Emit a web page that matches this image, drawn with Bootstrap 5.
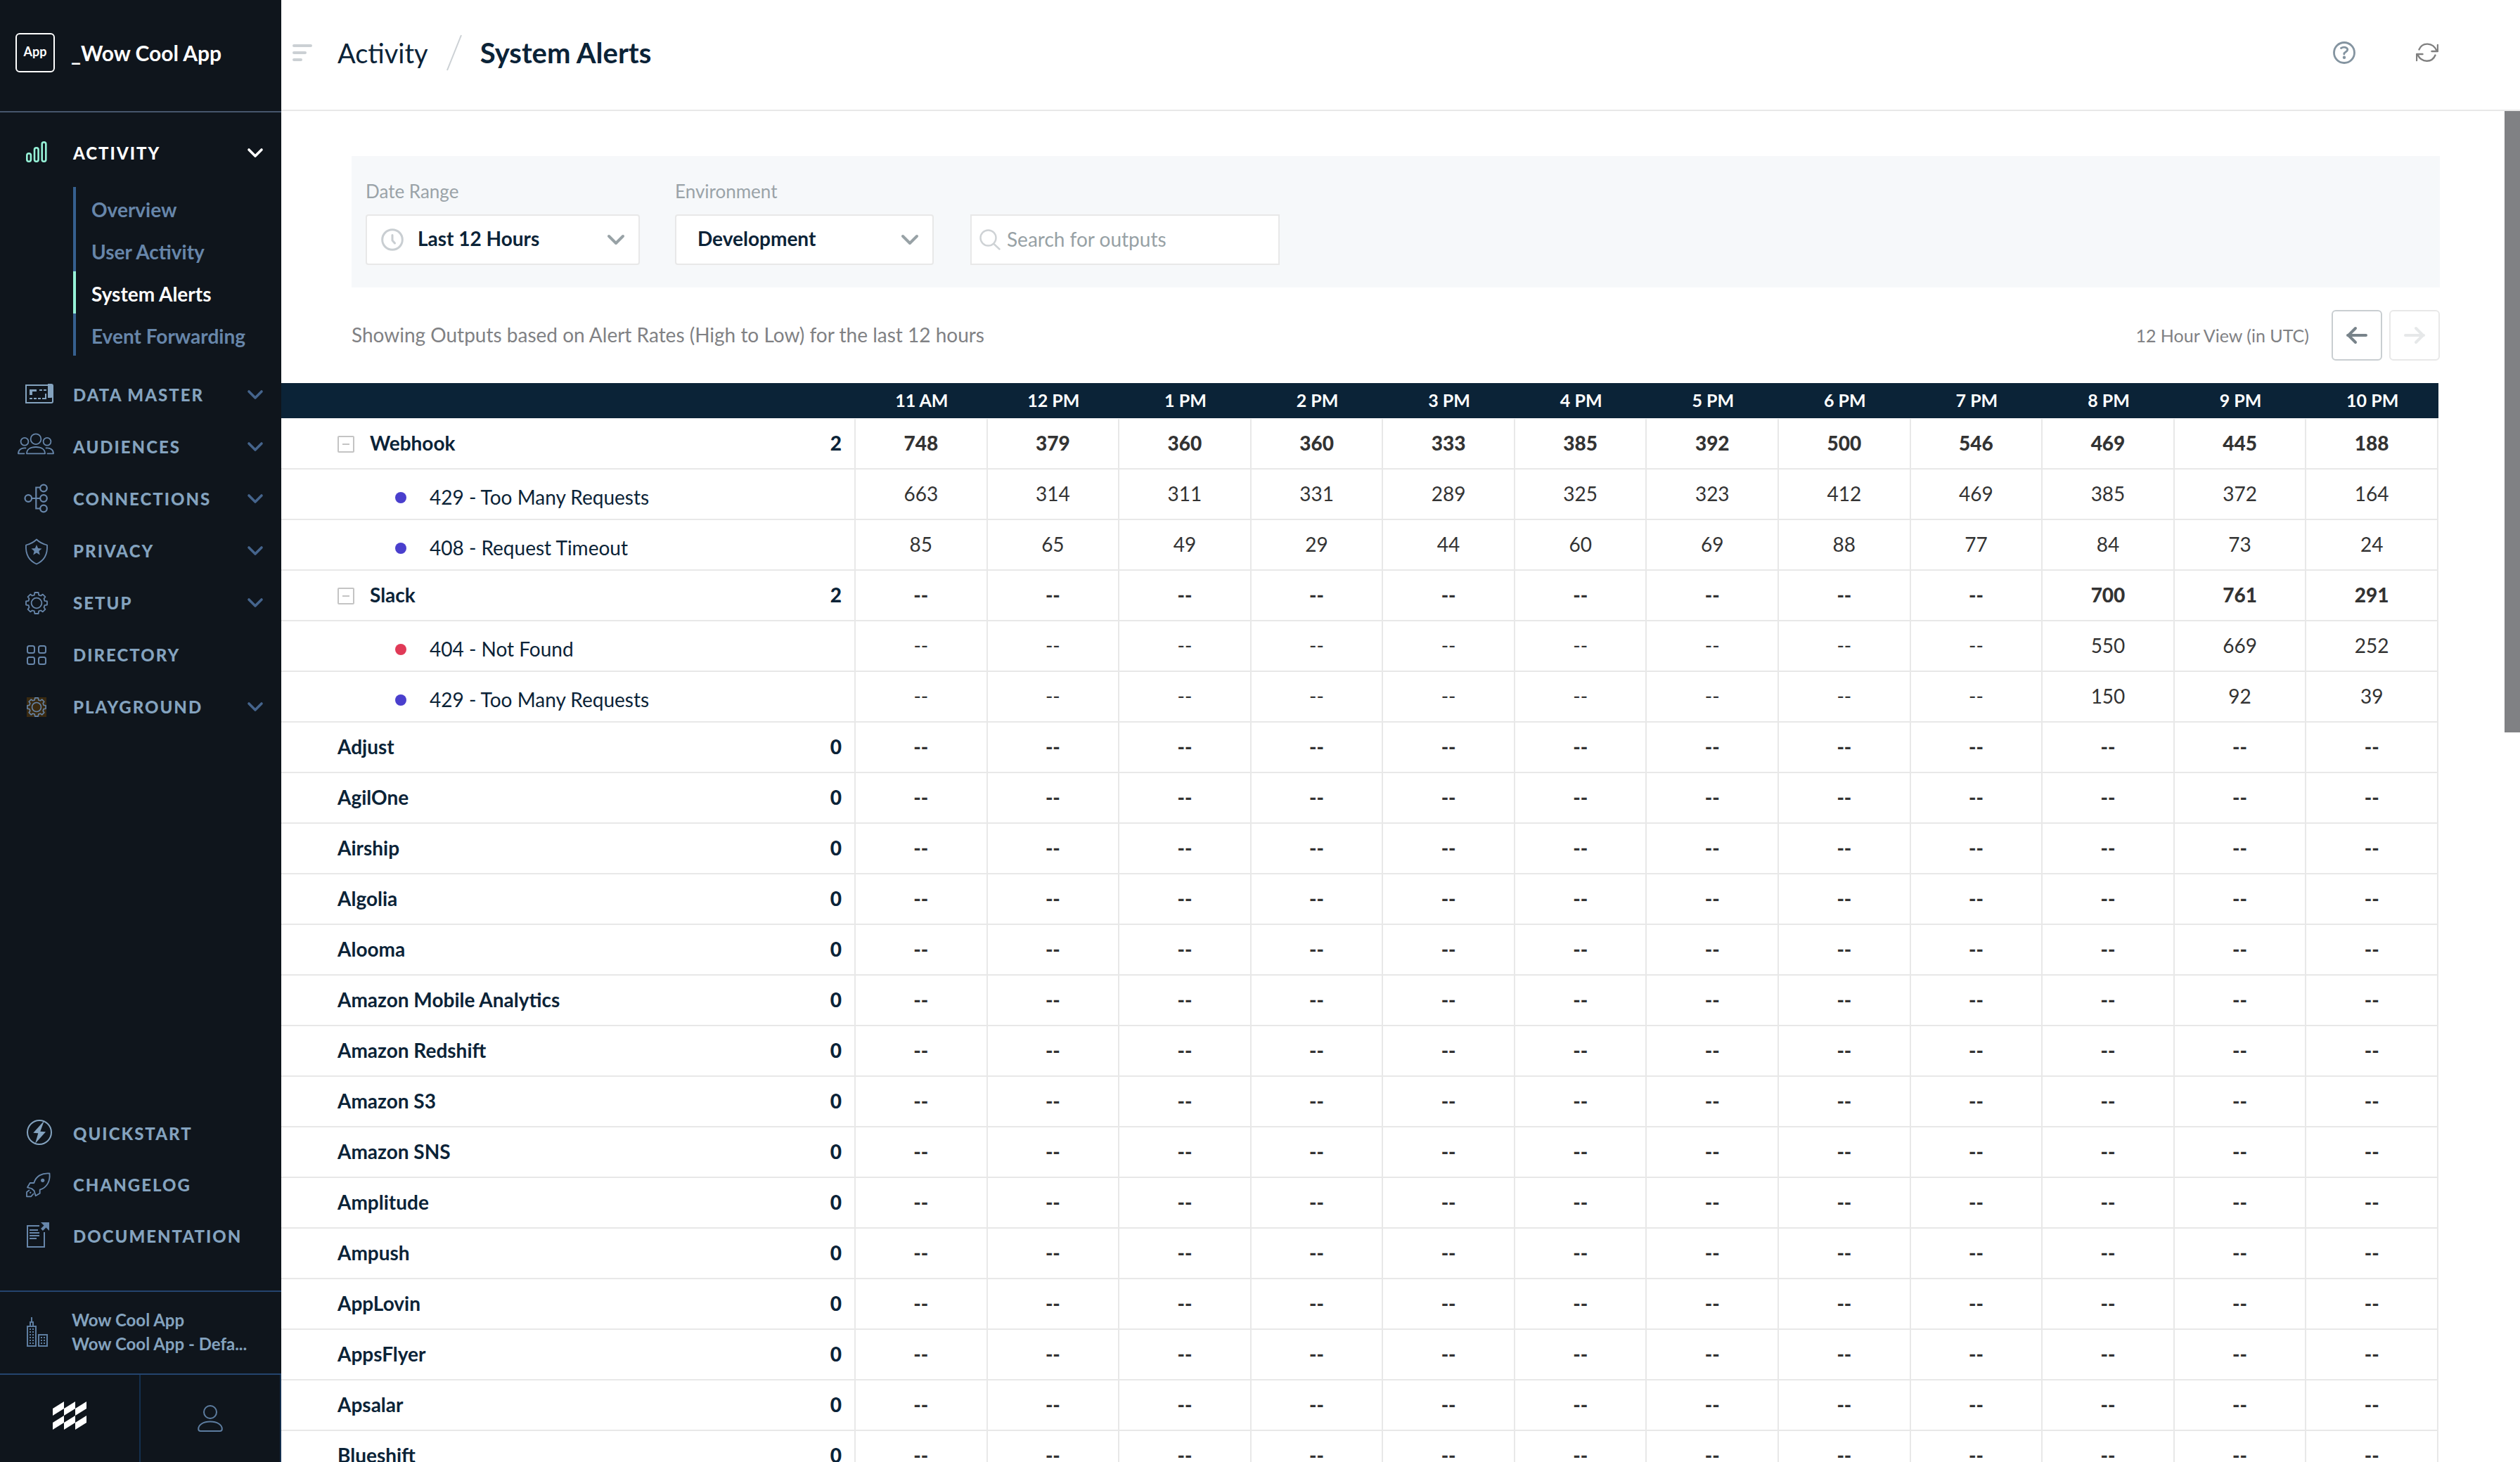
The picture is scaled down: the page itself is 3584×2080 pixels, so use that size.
<!DOCTYPE html>
<html lang="en">
<head>
<meta charset="utf-8">
<meta name="viewport" content="width=device-width, initial-scale=1">
<title>System Alerts</title>
<link rel="stylesheet" href="https://cdn.jsdelivr.net/npm/bootstrap@5.3.0/dist/css/bootstrap.min.css">
<style>
  :root { --ink: #0b2337; --rail: #0f151c; --steel: #84a3bf; --slate: #6786aa; --line: #e8e8e8; --mint: #96f2d7; }
  body { font-family: "Lato", "Liberation Sans", sans-serif; font-size: 28px; line-height: 36px; color: var(--ink); background: #fff; }
  svg { display: block; flex: none; }
  a { text-decoration: none; }

  /* sidebar */
  .rail { flex: 0 0 400px; background: var(--rail); color: var(--steel); }
  .rail-brand { height: 160px; padding: 0 22px 8px; gap: 23px; border-bottom: 2px solid #46566c; color: #fff; font-size: 30px; font-weight: 700; }
  .app-tile { width: 56px; height: 56px; border: 2px solid #fff; border-radius: 6px; font-size: 18px; line-height: 20px; padding-bottom: 4px; }
  .rail-main { padding-top: 21px; }
  .rail-link { height: 74px; padding: 0 25px 0 24px; gap: 24px; color: var(--steel); font-size: 24px; font-weight: 900; letter-spacing: 2px; }
  .rail-link .ico { color: var(--slate); }
  .rail-link .caret { color: #45648c; }
  .rail-link.current, .rail-link.current .caret { color: #fff; }
  .rail-link.current .ico { color: var(--mint); }
  .rail-sub { margin: 11px 0 19px 104px; }
  .rail-sub a { display: block; height: 60px; line-height: 64px; padding-left: 22px; border-left: 4px solid #36608f; color: var(--slate); font-weight: 700; }
  .rail-sub a.current { border-color: var(--mint); color: #fff; }
  .rail-help { padding-bottom: 41px; }
  .rail-help .rail-link { height: 73px; }
  .rail-org { height: 118px; padding: 0 24px 2px; gap: 22px; border-top: 2px solid #24446e; color: var(--steel); font-size: 24px; line-height: 34px; font-weight: 700; }
  .rail-org .ico { color: #5d7da0; }
  .rail-foot { height: 126px; border-top: 2px solid #24446e; }
  .rail-foot a { border-right: 2px solid #14304f; color: #5d7da0; }
  .rail-foot a.logo { color: #fff; padding-bottom: 8px; }

  /* top bar */
  .topbar { height: 158px; border-bottom: 2px solid var(--line); padding: 0 116px 6px 16px; font-size: 38px; line-height: 48px; }
  .topbar a { color: var(--ink); }
  .topbar h1 { font-size: 40px; line-height: 48px; }
  .burger, .tool { border: 0; background: none; padding: 0; }
  .burger { color: #cbd0d4; margin-right: 36px; }
  .tools { gap: 86px; }

  /* filters */
  .filters { margin: 64px 92px 0 100px; padding: 32px 20px 32px; background: #f6f8fa; }
  .filters label { display: block; font-size: 26px; line-height: 36px; margin-bottom: 15px; color: #9aa3a8; }
  .box { height: 72px; border: 2px solid var(--line); border-radius: 4px; background: #fff; font-size: 28px; padding: 0 40px 4px 30px; color: var(--ink); font-weight: 700; width: 100%; appearance: none; }
  .box-date { padding-left: 72px; }
  .box-search { border-radius: 0; font-weight: 400; padding: 0 16px 2px 50px; }
  .box-search::placeholder { color: #97a1a5; opacity: 1; }
  .w-date { width: 390px; margin-right: 50px; }
  .w-env { width: 368px; margin-right: 52px; }
  .w-search { width: 440px; }
  .pin { position: absolute; top: 0; height: 72px; display: flex; align-items: center; pointer-events: none; }
  .pin-l { left: 22px; color: #c9ced2; }
  .pin-s { left: 13px; color: #ced2d5; }
  .pin-r { right: 20px; color: #98a2a6; }

  .caption-bar { margin: 32px 92px 32px 100px; color: #808184; }
  .caption { padding-bottom: 2px; }
  .range { font-size: 25px; margin-right: 32px; }
  .pagers { gap: 10px; }
  .pager { width: 72px; height: 72px; border: 2px solid #c9ced1; border-radius: 6px; background: #fff; color: #78838a; padding: 0; }
  .pager:disabled { border-color: var(--line); color: #e6e8e9; }

  /* alert grid */
  .grid-wrap { margin-right: 94px; }
  .grid { width: 100%; table-layout: fixed; border-collapse: separate; border-spacing: 0; }
  .grid col.name { width: 817px; }
  .grid th, .grid td { padding: 0 0 2px; text-align: center; }
  .grid thead td, .grid thead th { height: 51px; background: var(--ink); border-bottom: 1px solid #fff; color: #fff; font-size: 25px; line-height: 32px; font-weight: 700; }
  .grid tbody th, .grid tbody td { height: 72px; border-bottom: 2px solid var(--line); border-right: 2px solid var(--line); font-weight: 400; color: #333; }
  .grid tbody tr.top td { font-weight: 900; }
  .grid tbody tr.top th { font-weight: 700; }
  .grid tbody th { color: var(--ink); padding: 0 18px 2px 80px; }
  .grid tbody tr.code th { padding: 7px 18px 0 162px; }
  .count { font-weight: 900; }
  .fold { border: 0; background: none; padding: 4px 0 0; margin-right: 22px; color: #c4c4c4; }
  .dot { width: 16px; height: 16px; border-radius: 50%; margin: 3px 33px 0 0; }
  .dot-blue { background: #4a3fcd; }
  .dot-red { background: #e03a57; }

  .track { flex: 0 0 22px; }
  .thumb { height: 46%; background: #808184; }
</style>
<script src="https://cdn.jsdelivr.net/npm/bootstrap@5.3.0/dist/js/bootstrap.bundle.min.js"></script>
</head>
<body>
<svg width="0" height="0" class="position-absolute" aria-hidden="true">
  <symbol id="i-caret" viewBox="0 0 24 16"><path d="M3 3l9 9 9-9" fill="none" stroke="currentColor" stroke-width="3.6" stroke-linecap="round" stroke-linejoin="round"/></symbol>
  <symbol id="i-gear" viewBox="0 0 32 32"><g fill="none" stroke="currentColor" stroke-width="1.8" stroke-linejoin="round"><path d="M12.8 4.6L13.4 1H18.6L19.2 4.6 22.2 5.5 24.8 3.6 28.4 7.2 26.5 9.8 27.4 12.8 31 13.4V18.6L27.4 19.2 26.5 22.2 28.4 24.8 24.8 28.4 22.2 26.5 19.2 27.4 18.6 31H13.4L12.8 27.4 9.8 26.5 7.2 28.4 3.6 24.8 5.5 22.2 4.6 19.2 1 18.6V13.4L4.6 12.8 5.5 9.8 3.6 7.2 7.2 3.6 9.8 5.5Z"/><circle cx="16" cy="16" r="7.4"/></g></symbol>
</svg>

<div class="d-flex vh-100 overflow-hidden">
  <aside class="rail d-flex flex-column">
    <div class="rail-brand d-flex align-items-center">
      <span class="app-tile d-flex align-items-center justify-content-center">App</span>
      <span>_Wow Cool App</span>
    </div>

    <nav class="d-flex flex-column flex-grow-1" aria-label="Main">
      <div class="rail-main mb-auto">
        <a href="#" class="rail-link current d-flex align-items-center">
          <svg class="ico" width="56" height="44" fill="none" stroke="currentColor" stroke-width="2.6"><rect x="14.3" y="22.3" width="5.6" height="11.4" rx="2.8"/><rect x="25" y="14.3" width="5.6" height="19.4" rx="2.8"/><rect x="35.7" y="6.3" width="5.6" height="27.4" rx="2.8"/></svg>
          <span class="flex-grow-1">ACTIVITY</span><svg class="caret" width="24" height="16"><use href="#i-caret"/></svg>
        </a>
        <div class="rail-sub">
          <a href="#">Overview</a>
          <a href="#">User Activity</a>
          <a href="#" class="current" aria-current="page">System Alerts</a>
          <a href="#">Event Forwarding</a>
        </div>
        <a href="#" class="rail-link d-flex align-items-center">
          <svg class="ico" width="56" height="44" fill="none" stroke="#84a3bf" stroke-width="2"><path d="M45 8H13v25h36q2 0 2-2v-5"/><path d="M44 6h5q3 0 3 3v18q-2-2-4-1h-4z" fill="#84a3bf" stroke="none"/><path d="M18 14h10v3h-6v5h-4z" fill="#84a3bf" stroke="none"/><path d="M32 15h4m2 0h4M18 27h4m2 0h4m2 0h4m2 0h5v-7"/></svg>
          <span class="flex-grow-1">DATA MASTER</span><svg class="caret" width="24" height="16"><use href="#i-caret"/></svg>
        </a>
        <a href="#" class="rail-link d-flex align-items-center">
          <svg class="ico" width="56" height="44" fill="none" stroke="currentColor" stroke-width="1.8" stroke-linecap="round" stroke-linejoin="round"><circle cx="27" cy="10.7" r="7.4"/><circle cx="11" cy="14.3" r="5.4"/><circle cx="43" cy="14.3" r="5.4"/><path d="M14 31.3c0-6 5-9.3 13-9.3s13 3.3 13 9.3zM12.5 23.5C6 23 2 26 2 31.3h8.5M41.5 23.5C48 23 52 26 52 31.3h-8.5"/></svg>
          <span class="flex-grow-1">AUDIENCES</span><svg class="caret" width="24" height="16"><use href="#i-caret"/></svg>
        </a>
        <a href="#" class="rail-link d-flex align-items-center">
          <svg class="ico" width="56" height="44" fill="none" stroke="currentColor" stroke-width="2.2"><circle cx="16.3" cy="21" r="4.8"/><circle cx="38" cy="6.5" r="4.8"/><circle cx="38" cy="21" r="4.8"/><circle cx="38" cy="35.5" r="4.8"/><path d="M21 21h12M33 5.5h-5.7v30H33"/></svg>
          <span class="flex-grow-1">CONNECTIONS</span><svg class="caret" width="24" height="16"><use href="#i-caret"/></svg>
        </a>
        <a href="#" class="rail-link d-flex align-items-center">
          <svg class="ico" width="56" height="44" fill="none" stroke="currentColor" stroke-width="1.8" stroke-linejoin="round"><path d="M28 5.500c4 4 9 6.500 15 8 .8 12-4 22-15 27C17 35.500 12.200 25.500 13 13.500c6-1.500 11-4 15-8z"/><path fill="currentColor" stroke="none" d="M28 13l2.100 5.100 5.400.4-4.100 3.500 1.300 5.400L28 24.500l-4.700 2.900 1.300-5.400-4.100-3.500 5.400-.4z"/></svg>
          <span class="flex-grow-1">PRIVACY</span><svg class="caret" width="24" height="16"><use href="#i-caret"/></svg>
        </a>
        <a href="#" class="rail-link d-flex align-items-center">
          <svg class="ico" width="56" height="44"><use href="#i-gear" x="12" y="6" width="32" height="32"/></svg>
          <span class="flex-grow-1">SETUP</span><svg class="caret" width="24" height="16"><use href="#i-caret"/></svg>
        </a>
        <a href="#" class="rail-link d-flex align-items-center">
          <svg class="ico" width="56" height="44" fill="none" stroke="currentColor" stroke-width="2"><rect x="15" y="9" width="10" height="10" rx="2.5"/><rect x="31" y="9" width="10" height="10" rx="2.5"/><rect x="15" y="25" width="10" height="10" rx="2.5"/><rect x="31" y="25" width="10" height="10" rx="2.5"/></svg>
          <span class="flex-grow-1">DIRECTORY</span>
        </a>
        <a href="#" class="rail-link d-flex align-items-center">
          <svg class="ico" width="56" height="44"><rect x="14" y="8" width="28" height="28" fill="#3a2a10"/><use href="#i-gear" x="14" y="8" width="28" height="28"/></svg>
          <span class="flex-grow-1">PLAYGROUND</span><svg class="caret" width="24" height="16"><use href="#i-caret"/></svg>
        </a>
      </div>

      <div class="rail-help">
        <a href="#" class="rail-link d-flex align-items-center">
          <svg class="ico" width="56" height="44" fill="none" stroke="#84a3bf" stroke-width="2"><circle cx="32" cy="20" r="17"/><path fill="#84a3bf" stroke="none" d="M39 3.3L23.3 20.7l7 .6L26 36l15-16.7-7.7-.6z"/></svg>
          <span>QUICKSTART</span>
        </a>
        <a href="#" class="rail-link d-flex align-items-center">
          <svg class="ico" width="56" height="44" fill="none" stroke="currentColor" stroke-width="1.8" stroke-linejoin="round"><path d="M24.3 19C27 9 36 4.5 46.500 5.500c1 10-3 20-13.800 23.200v5l-6 3.600-2.200-7.300-3.500-3-6-1.700 3.700-6.300z"/><path d="M18 29l-4 3v6.300h6l4-4.300M18.500 33.500L20 32"/><circle cx="36.7" cy="15.3" r="2.6" fill="currentColor" stroke="none"/></svg>
          <span>CHANGELOG</span>
        </a>
        <a href="#" class="rail-link d-flex align-items-center">
          <svg class="ico" width="56" height="44" fill="none" stroke="currentColor" stroke-width="2"><path d="M32 7H15v30h24V16M18 13h12M18 17h14M18 21h14M18 25h10"/><path d="M35.500 12.500l6-6" stroke-width="4"/><path d="M34 2h12v12z" fill="currentColor" stroke="none"/></svg>
          <span>DOCUMENTATION</span>
        </a>
      </div>
    </nav>

    <a href="#" class="rail-org d-flex align-items-center">
      <svg class="ico" width="56" height="44" fill="none" stroke="currentColor" stroke-width="2"><path d="M21 1v6M19 13V8h4v5M15 14h12v28H15zM31 26h12v16H31z"/><path stroke-dasharray="2 2" d="M19 17v22M23 17v22M35 29v10M39 29v10"/></svg>
      <span class="text-nowrap">Wow Cool App<br>Wow Cool App - Defa...</span>
    </a>
    <div class="rail-foot d-flex">
      <a href="#" class="logo flex-fill w-50 d-flex align-items-center justify-content-center" aria-label="Home"><svg width="48" height="40" fill="currentColor"><path d="M0 10L16 0V10L0 20zM16 10L32 0V10L16 20zM32 10L48 0V10L32 20zM0 30L16 20V30L0 40zM16 30L32 20V30L16 40zM32 30L48 20V30L32 40z"/></svg></a>
      <a href="#" class="flex-fill w-50 d-flex align-items-center justify-content-center" aria-label="Account"><svg width="36" height="38" fill="none" stroke="currentColor" stroke-width="2"><circle cx="18" cy="10" r="9"/><path d="M1.2 34c0-6 7-10.500 16.800-10.500S34.800 28 34.800 34q0 3-3 3H4.200q-3 0-3-3z"/></svg></a>
    </div>
  </aside>

  <div class="flex-grow-1 d-flex flex-column overflow-hidden">
    <header class="topbar d-flex align-items-center flex-shrink-0">
      <button class="burger" type="button" aria-label="Toggle menu"><svg width="28" height="24" stroke="currentColor" stroke-width="4" stroke-linecap="round"><path d="M2 2h24M2 12h16M2 22h10"/></svg></button>
      <a href="#">Activity</a>
      <svg class="mx-4" width="26" height="52" stroke="#cbd0d4" stroke-width="2"><path d="M3 51L23 1"/></svg>
      <h1 class="m-0 fw-bold">System Alerts</h1>
      <div class="tools d-flex align-items-center ms-auto">
        <button class="tool" type="button" aria-label="Help"><svg width="32" height="32" fill="none" stroke="#8494a0" stroke-width="2.8"><circle cx="16" cy="16" r="14.5"/><path d="M11.500 9.500c3.500-2.300 9.200-1.500 9.200 2.300 0 3.200-4.900 2.800-4.900 6.200" stroke-linecap="round"/><circle cx="16" cy="22.8" r="2.2" fill="#8494a0" stroke="none"/></svg></button>
        <button class="tool" type="button" aria-label="Refresh"><svg width="32" height="28" fill="none" stroke="#808080" stroke-width="2.4" stroke-linecap="round" stroke-linejoin="round"><path d="M4.500 9.500C9 -1.500 24 -1 29.500 11M31 3v9h-8.500M27.500 17.500C23 28.500 8 28.500 2.500 17M1 25v-9h8.500"/></svg></button>
      </div>
    </header>

    <div class="d-flex flex-grow-1 overflow-hidden">
      <main class="flex-grow-1 overflow-hidden">
        <form class="filters d-flex align-items-end">
          <div class="w-date">
            <label for="range">Date Range</label>
            <div class="position-relative">
              <span class="pin pin-l"><svg width="32" height="32" fill="none" stroke="currentColor" stroke-width="3" stroke-linecap="round" stroke-linejoin="round"><circle cx="16" cy="16" r="14.3"/><path d="M16 9.500V17l3.500 4"/></svg></span>
              <select id="range" class="box box-date"><option>Last 12 Hours</option></select>
              <span class="pin pin-r"><svg width="28" height="18" fill="none" stroke="currentColor" stroke-width="4" stroke-linecap="round" stroke-linejoin="round"><path d="M4 4l10 10L24 4"/></svg></span>
            </div>
          </div>
          <div class="w-env">
            <label for="env">Environment</label>
            <div class="position-relative">
              <select id="env" class="box"><option>Development</option></select>
              <span class="pin pin-r"><svg width="28" height="18" fill="none" stroke="currentColor" stroke-width="4" stroke-linecap="round" stroke-linejoin="round"><path d="M4 4l10 10L24 4"/></svg></span>
            </div>
          </div>
          <div class="w-search position-relative">
            <span class="pin pin-s"><svg width="30" height="30" fill="none" stroke="currentColor" stroke-width="2.4" stroke-linecap="round"><circle cx="12.5" cy="12.5" r="11"/><path d="M21 21.500l7.500 7"/></svg></span>
            <input type="search" class="box box-search" placeholder="Search for outputs" aria-label="Search for outputs">
          </div>
        </form>

        <div class="caption-bar d-flex align-items-center">
          <span class="caption me-auto">Showing Outputs based on Alert Rates (High to Low) for the last 12 hours</span>
          <span class="range">12 Hour View (in UTC)</span>
          <div class="pagers d-flex">
            <button type="button" class="pager d-flex align-items-center justify-content-center" aria-label="Earlier"><svg width="32" height="26" fill="none" stroke="currentColor" stroke-width="4" stroke-linecap="round" stroke-linejoin="round"><path d="M29 13H3M14 3L4 13l10 10"/></svg></button>
            <button type="button" class="pager d-flex align-items-center justify-content-center" aria-label="Later" disabled><svg width="32" height="26" fill="none" stroke="currentColor" stroke-width="4" stroke-linecap="round" stroke-linejoin="round"><path d="M3 13h26M18 3l10 10-10 10"/></svg></button>
          </div>
        </div>

        <div class="grid-wrap">
          <table class="grid" aria-label="Alerts per output and hour">
            <colgroup><col class="name"><col span="12"></colgroup>
            <thead><tr id="hours"><td></td></tr></thead>
            <tbody id="rows"></tbody>
          </table>
        </div>
      </main>
      <div class="track"><div class="thumb"></div></div>
    </div>
  </div>
</div>

<script>
  const hours = ['11 AM','12 PM','1 PM','2 PM','3 PM','4 PM','5 PM','6 PM','7 PM','8 PM','9 PM','10 PM'];
  const none = n => Array(n).fill('--');
  const outputs = [
    { name: 'Webhook', count: 2, rates: [748,379,360,360,333,385,392,500,546,469,445,188], codes: [
      { text: '429 - Too Many Requests', dot: 'blue', rates: [663,314,311,331,289,325,323,412,469,385,372,164] },
      { text: '408 - Request Timeout', dot: 'blue', rates: [85,65,49,29,44,60,69,88,77,84,73,24] } ] },
    { name: 'Slack', count: 2, rates: [...none(9),700,761,291], codes: [
      { text: '404 - Not Found', dot: 'red', rates: [...none(9),550,669,252] },
      { text: '429 - Too Many Requests', dot: 'blue', rates: [...none(9),150,92,39] } ] },
    ...['Adjust','AgilOne','Airship','Algolia','Alooma','Amazon Mobile Analytics','Amazon Redshift','Amazon S3','Amazon SNS','Amplitude','Ampush','AppLovin','AppsFlyer','Apsalar','Blueshift']
      .map(name => ({ name, count: 0, rates: none(12), codes: [] }))
  ];
  const cells = rates => rates.map(r => `<td>${r}</td>`).join('');
  const fold = '<button type="button" class="fold" aria-label="Collapse"><svg width="24" height="24" fill="none" stroke="currentColor" stroke-width="2"><rect x="1" y="1" width="22" height="22" rx="1"/><path d="M7 12h10"/></svg></button>';
  document.getElementById('hours').insertAdjacentHTML('beforeend', hours.map(h => `<th scope="col">${h}</th>`).join(''));
  document.getElementById('rows').innerHTML = outputs.map(o =>
    `<tr class="top"><th scope="row"><div class="d-flex align-items-center">${o.codes.length ? fold : ''}<span>${o.name}</span><span class="count ms-auto">${o.count}</span></div></th>${cells(o.rates)}</tr>` +
    o.codes.map(c => `<tr class="code"><th scope="row"><div class="d-flex align-items-center"><span class="dot dot-${c.dot}"></span><span>${c.text}</span></div></th>${cells(c.rates)}</tr>`).join('')
  ).join('');
</script>
</body>
</html>
